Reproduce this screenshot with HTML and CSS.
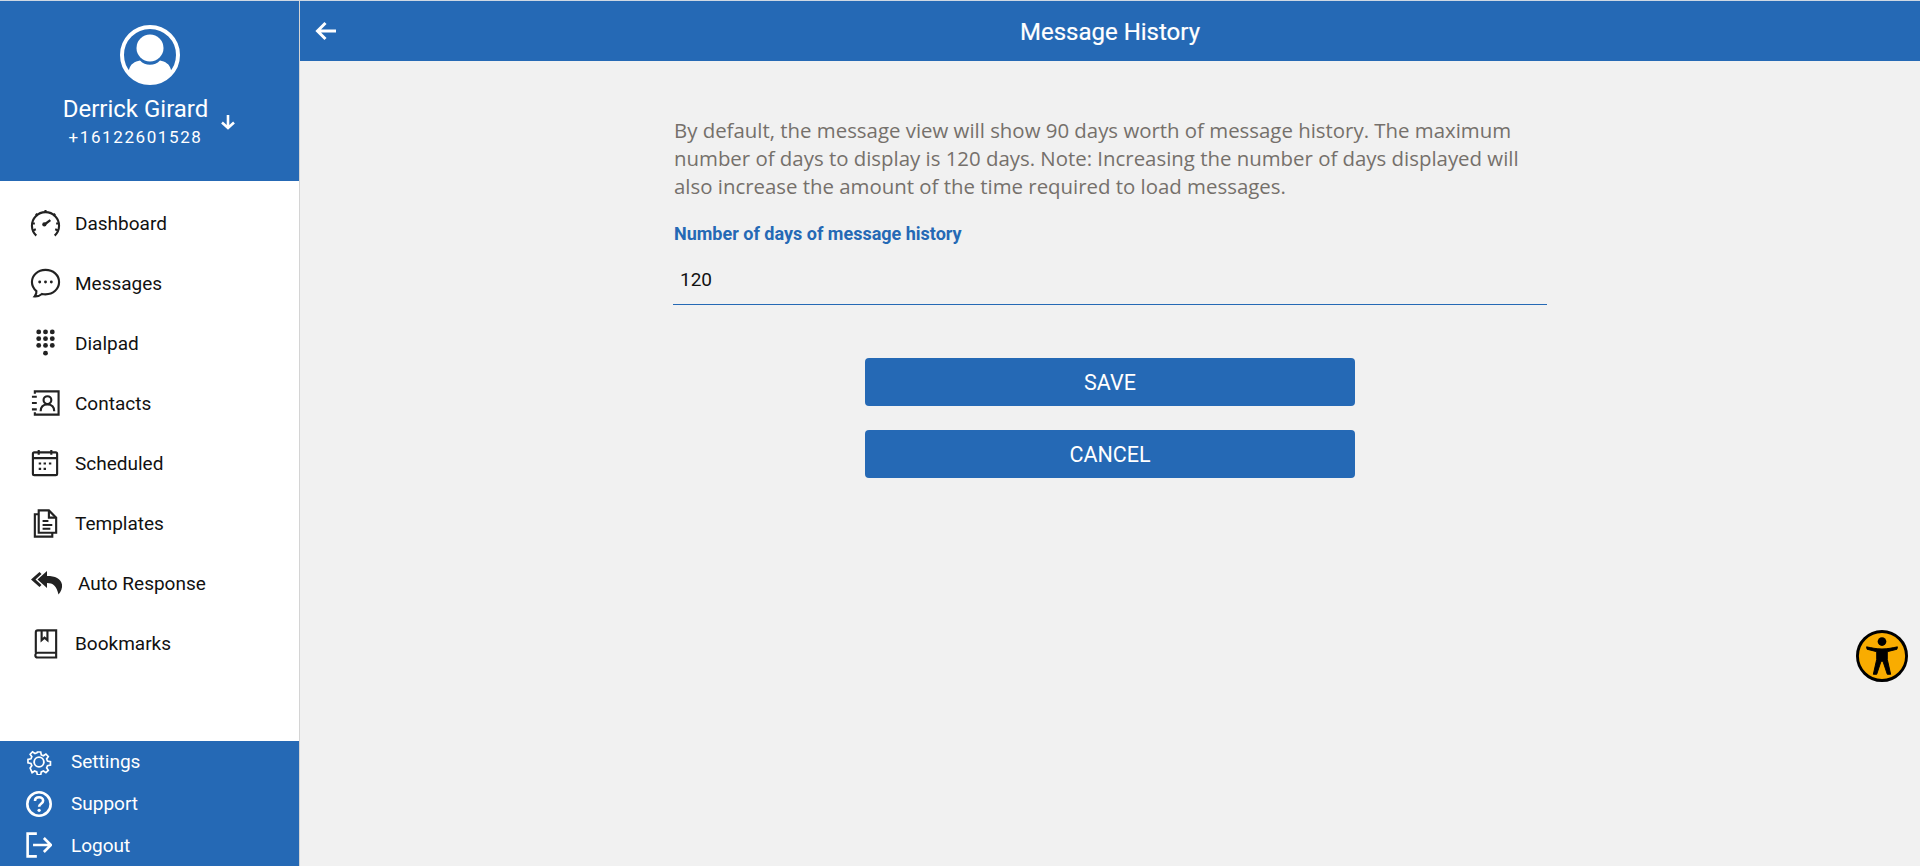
FILE: index.html
```html
<!DOCTYPE html>
<html lang="en">
<head>
<meta charset="utf-8">
<title>Message History</title>
<link rel="stylesheet" href="styles.css">
</head>
<body>
<div class="app">
  <aside class="sidebar">
    <div class="profile">
      <svg class="avatar" viewBox="0 0 60 60"><defs><clipPath id="av"><circle cx="30" cy="30" r="27"/></clipPath></defs><circle cx="30" cy="30" r="28" fill="none" stroke="#fff" stroke-width="4"/><circle cx="30" cy="23" r="13.5" fill="#fff"/><path clip-path="url(#av)" d="M9 45c1-6 6-8.500 11-9.500 2.800 3 6 4.300 10 4.300s7.200-1.300 10-4.300c5 1 10 3.500 11 9.500v17H9z" fill="#fff"/></svg>
      <div class="who">
        <div class="who-text">
          <div class="name">Derrick Girard</div>
          <div class="phone">+16122601528</div>
        </div>
        <svg class="down" viewBox="0 0 16 16"><path d="M8 1v13M2 8.500 8 14l6-5.500" fill="none" stroke="#fff" stroke-width="2.600"/></svg>
      </div>
    </div>
    <nav class="nav">
      <a class="nav-item"><svg class="ico" viewBox="0 0 32 32"><g fill="none" stroke="#222" stroke-width="2.200"><path d="M6.500 28.500A14 14 0 1 1 25.500 28.500"/><path d="M16 2v3M6 6l2 2M26 6l-2 2M2 16h3M30 16h-3M3.500 23l2.500-1M28.500 23l-2.500-1"/><path d="M15 17l6-4.500" stroke-width="2.400"/></g><circle cx="14.800" cy="17" r="2.200" fill="#222"/></svg><span>Dashboard</span></a>
      <a class="nav-item"><svg class="ico" viewBox="0 0 32 32"><path d="M16 2C8 2 2 7.600 2 14.500c0 3.800 1.800 7 4.600 9.300.3 2-.6 4-1.800 5.500 3 .2 5.700-1 7.500-2.500 1.200.3 2.400.4 3.700.4 8 0 14-5.600 14-12.700S24 2 16 2z" fill="none" stroke="#222" stroke-width="2.200"/><circle cx="10" cy="14.500" r="1.500" fill="#222"/><circle cx="16" cy="14.500" r="1.500" fill="#222"/><circle cx="22" cy="14.500" r="1.500" fill="#222"/></svg><span>Messages</span></a>
      <a class="nav-item"><svg class="ico" viewBox="0 0 32 32" fill="#222"><circle cx="9" cy="4" r="2.500"/><circle cx="16" cy="4" r="2.500"/><circle cx="23" cy="4" r="2.500"/><circle cx="9" cy="11" r="2.500"/><circle cx="16" cy="11" r="2.500"/><circle cx="23" cy="11" r="2.500"/><circle cx="9" cy="18" r="2.500"/><circle cx="16" cy="18" r="2.500"/><circle cx="23" cy="18" r="2.500"/><circle cx="16" cy="26" r="2.500"/></svg><span>Dialpad</span></a>
      <a class="nav-item"><svg class="ico" viewBox="0 0 32 32"><g fill="none" stroke="#222" stroke-width="2.200"><path d="M5 6V3.500h24.500v24H5V25"/><circle cx="18" cy="12.500" r="4"/><path d="M11 24c0-5 3-7 7-7s7 2 7 7"/><path d="M2 9h5M2 15.500h5M2 22h5"/></g></svg><span>Contacts</span></a>
      <a class="nav-item"><svg class="ico" viewBox="0 0 32 32"><g fill="none" stroke="#222" stroke-width="2.200"><rect x="3" y="4.500" width="25" height="23.500" rx="1.500"/><path d="M3 10.500h25M9 2v5M22 2v5"/><path d="M9 16h2.500M14 16h2.500M19.500 16h2.500M9 21.500h2.500M14 21.500h2.500"/></g></svg><span>Scheduled</span></a>
      <a class="nav-item"><svg class="ico" viewBox="0 0 32 32"><g fill="none" stroke="#222" stroke-width="2.200"><path d="M9 2.500h10.500L27 10v15.500H9z"/><path d="M19.500 2.500V10H27"/><path d="M9 6.500H5v23h18v-4"/></g><path d="M13 13.500h6M13 17.500h10M13 21.500h8" stroke="#222" stroke-width="2"/></svg><span>Templates</span></a>
      <a class="nav-item"><svg class="ico-wide" viewBox="0 0 34 26" fill="#222"><path d="M9.500 2 1 9.500 9.500 17l2-2L5.500 9.500l6-5.500z"/><path d="M17 1 7.500 9.500 17 18v-5c6 0 9.500 2.500 11.500 11.500 2.500-3 4-6.500 3.500-10C31 8.500 25 6 17 6z"/></svg><span>Auto Response</span></a>
      <a class="nav-item"><svg class="ico" viewBox="0 0 32 32"><g fill="none" stroke="#222" stroke-width="2.200"><path d="M6 25.500V4.500A2 2 0 0 1 8 2.500h19v23H8a2.500 2.500 0 0 0 0 5h19v-5"/></g><path d="M12 3v9.500l3-2.500 3 2.500V3" fill="none" stroke="#222" stroke-width="2.200"/></svg><span>Bookmarks</span></a>
    </nav>
    <div class="foot">
      <a class="foot-item"><svg class="foot-ico" viewBox="0 0 24 24" fill="none" stroke="#fff" stroke-width="1.700"><circle cx="12" cy="12" r="4.500"/><path d="M10.300 1.800h3.400l.6 3 2.200.9 2.500-1.700 2.400 2.400-1.700 2.500.9 2.200 3 .6v3.400l-3 .6-.9 2.200 1.700 2.500-2.400 2.400-2.500-1.700-2.200.9-.6 3h-3.400l-.6-3-2.200-.9-2.500 1.700L3 18.100l1.700-2.500-.9-2.200-3-.6V9.400l3-.6.9-2.200L3 4.100 5.400 1.700 7.900 3.400l2.200-.9z" transform="translate(1.100 1.100) scale(.91)"/></svg><span>Settings</span></a>
      <a class="foot-item"><svg class="foot-ico" viewBox="0 0 24 24"><circle cx="12" cy="12" r="10.800" fill="none" stroke="#fff" stroke-width="2.400"/><path d="M8.300 9.300c0-2.200 1.700-3.500 3.800-3.500s3.700 1.300 3.700 3.200c0 2.800-3.700 2.800-3.700 5.500" fill="none" stroke="#fff" stroke-width="2.400"/><circle cx="12.100" cy="17.800" r="1.500" fill="#fff"/></svg><span>Support</span></a>
      <a class="foot-item"><svg class="foot-ico" viewBox="0 0 24 24" fill="none" stroke="#fff" stroke-width="2.400"><path d="M10 1.500H1.500v21H10"/><path d="M6.500 12H23M16.500 5.500 23 12l-6.500 6.500"/></svg><span>Logout</span></a>
    </div>
  </aside>
  <main class="main">
    <header class="topbar">
      <svg class="back" viewBox="0 0 22 20"><path d="M21 10H3M10.500 2 2.500 10l8 8" fill="none" stroke="#fff" stroke-width="3"/></svg>
      <h1 class="title">Message History</h1>
    </header>
    <section class="content">
      <div class="form">
        <p class="intro">By default, the message view will show 90 days worth of message history. The maximum number of days to display is 120 days. Note: Increasing the number of days displayed will also increase the amount of the time required to load messages.</p>
        <label class="label" for="days">Number of days of message history</label>
        <input class="input" id="days" type="text" value="120">
        <div class="actions">
          <button class="btn" type="button">SAVE</button>
          <button class="btn" type="button">CANCEL</button>
        </div>
      </div>
    </section>
  </main>
</div>
<button class="a11y" type="button" aria-label="Accessibility"><svg viewBox="0 0 54 54"><circle cx="27" cy="27" r="25.500" fill="#f9ac00" stroke="#000" stroke-width="3"/><circle cx="27" cy="12" r="4.500" fill="#000"/><path d="M11 17.500l.5 2.500 10 2.500v8L18 46h3.500L26 32.500h2L32.500 46H36l-3.500-15.500v-8l10-2.500.5-2.500c-5 1-10 2.200-16 2.200s-11-1.200-16-2.200z" fill="#000" stroke="#000" stroke-width="1"/></svg></button>
</body>
</html>
```
FILE: styles.css
```css
* { box-sizing: border-box; }
html, body { margin: 0; height: 100%; overflow: hidden; }
body { font-family: Roboto, "Liberation Sans", sans-serif; background: #f1f1f1; color: #111; }
.app { display: flex; height: 866px; padding-top: 1px; background: #cfd8e3; }
.sidebar { width: 300px; flex: none; display: flex; flex-direction: column; background: #fff; border-right: 1px solid #d4d4d4; }
.profile { height: 180px; background: #2569b5; display: flex; flex-direction: column; align-items: center; padding-top: 24px; }
.avatar { width: 60px; height: 60px; display: block; flex: none; }
.who { display: flex; align-items: flex-start; margin-top: 9px; }
.who-text { text-align: center; color: #fff; }
.name { font-size: 24px; line-height: 30px; }
.phone { font-size: 17px; line-height: 24px; letter-spacing: 1.600px; margin-top: 1px; }
.down { width: 16px; height: 16px; margin: 20px 0 0 12px; flex: none; }
.nav { flex: 1; padding-top: 12px; display: flex; flex-direction: column; }
.nav-item { height: 60px; display: flex; align-items: center; padding-left: 30px; gap: 14px; font-size: 19px; color: #111; }
.ico { width: 31px; height: 31px; flex: none; }
.ico-wide { width: 34px; height: 26px; flex: none; }
.foot { height: 125px; background: #2569b5; display: flex; flex-direction: column; flex: none; }
.foot-item { height: 42px; display: flex; align-items: center; padding-left: 26px; gap: 19px; color: #fff; font-size: 19px; }
.foot-ico { width: 26px; height: 26px; flex: none; }
.main { flex: 1; display: flex; flex-direction: column; background: #f1f1f1; }
.topbar { height: 60px; flex: none; background: #2569b5; display: flex; align-items: center; justify-content: center; position: relative; }
.back { position: absolute; left: 15px; top: 20px; width: 22px; height: 20px; }
.title { margin: 0; font-size: 24px; font-weight: 400; color: #fff; line-height: 30px; padding-top: 2px; -webkit-text-stroke: 0.200px #fff; }
.content { flex: 1; display: flex; justify-content: center; }
.form { width: 874px; padding-top: 55px; display: flex; flex-direction: column; }
.intro { margin: 0; padding-left: 1px; font-family: "Open Sans", sans-serif; font-size: 20.400px; line-height: 28px; color: #75706b; width: 870px; }
.label { margin-top: 22px; padding-left: 1px; font-size: 18px; line-height: 24px; font-weight: 700; color: #2569b5; }
.input { margin-top: 11px; height: 48px; border: 0; border-bottom: 1px solid #2569b5; background: transparent; font: 19px Roboto, sans-serif; color: #111; padding: 0 7px 2px; outline: none; }
.actions { margin-top: 53px; display: flex; flex-direction: column; align-items: center; gap: 24px; }
.btn { width: 490px; height: 48px; border: 0; border-radius: 4px; background: #2569b5; color: #fff; font: 21.500px Roboto, sans-serif; padding: 0; }
.a11y { position: fixed; left: 1856px; top: 630px; width: 52px; height: 52px; padding: 0; border: 0; background: none; }
.a11y svg { display: block; width: 52px; height: 52px; }
```
